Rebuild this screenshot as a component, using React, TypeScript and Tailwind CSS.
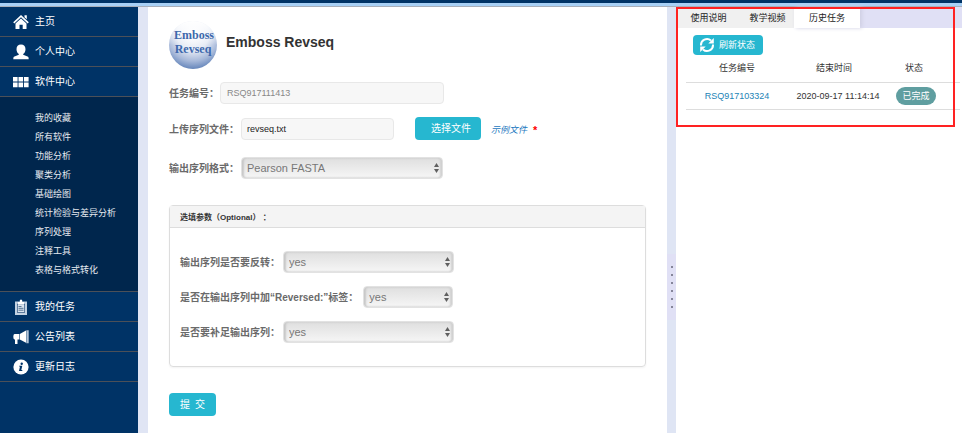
import type { ReactNode } from "react";

const SUB_ITEMS = [
  "我的收藏",
  "所有软件",
  "功能分析",
  "聚类分析",
  "基础绘图",
  "统计检验与差异分析",
  "序列处理",
  "注释工具",
  "表格与格式转化",
];

function HomeIcon() {
  return (
    <svg viewBox="0 0 16 16" className="h-4 w-4" fill="#fff" aria-hidden="true">
      <path d="M8 1 15.800 8.200l-1.100 1.200L8 3.300 1.300 9.400.2 8.200z" />
      <path d="M11.500 1.300h2.300v4l-2.300-2z" />
      <path d="M2.500 9.400 8 4.400l5.500 5V15H9.700v-4.200H6.500V15h-4z" />
    </svg>
  );
}

function UserIcon() {
  return (
    <svg viewBox="0 0 16 16" className="h-4 w-4" fill="#fff" aria-hidden="true">
      <path d="M8 .5c2.900 0 4.500 2 4.500 4.700 0 2.300-1 3.900-2.300 4.800v.8l4.300 1.700c.9.400 1.200 1 1.200 2.800H.3c0-1.800.3-2.400 1.200-2.800l4.300-1.700V10C4.500 9.100 3.500 7.500 3.500 5.200 3.500 2.500 5.100.5 8 .5z" />
    </svg>
  );
}

function GridIcon() {
  return (
    <svg viewBox="0 0 16 16" className="h-4 w-4" fill="#fff" aria-hidden="true">
      <path d="M0 3h4.600v4.600H0zM5.500 3h4.600v4.600H5.500zM11 3h4.600v4.600H11zM0 8.600h4.600v4.600H0zM5.500 8.600h4.600v4.600H5.500zM11 8.600h4.600v4.600H11z" />
    </svg>
  );
}

function ClipboardIcon() {
  return (
    <svg viewBox="0 0 16 16" className="h-4 w-4" aria-hidden="true">
      <path d="M2 2.500h12V16H2z" fill="#c3d2e2" />
      <path d="M4 4.800h8v8.900H4z" fill="#2f5580" />
      <path d="M4.700 5.500h6.600v7.500H4.700z" fill="#dbe5ef" />
      <path d="M5 3h1.800V1.200Q8-.4 9.200 1.200V3H11v2.500H5z" fill="#fff" />
      <path d="M5.500 7.500h3M5.500 9.300h5M5.500 11.200h5" stroke="#35587d" strokeWidth=".8" />
    </svg>
  );
}

function HornIcon() {
  return (
    <svg viewBox="0 0 16 16" className="h-4 w-4" aria-hidden="true">
      <path d="M1.500 5h4.800v5.500H4.500V15H2v-4.500h-.5Q.3 10.300.3 7.800.3 5 1.500 5z" fill="#fff" />
      <path d="M6.800 5 13 1.500v12.300L6.800 10.500z" fill="#fff" />
      <path d="M13.300 1.300h2.400v13h-2.400z" fill="#b3c5d8" />
    </svg>
  );
}

function InfoIcon() {
  return (
    <svg viewBox="0 0 16 16" className="h-4 w-4" aria-hidden="true">
      <circle cx="8" cy="8" r="7.600" fill="#fff" />
      <circle cx="8.700" cy="4.800" r="1.200" fill="#003366" />
      <path d="M6.200 6.700h3.100l-1 4.300h1.100l-.2.900H6l1-4.300H6z" fill="#003366" />
    </svg>
  );
}

function RefreshIcon() {
  return (
    <svg viewBox="0 0 16 16" className="h-4 w-4" aria-hidden="true">
      <path d="M2 8.500A6 6 0 0 1 12 3.600M14 7.500A6 6 0 0 1 4 12.400" fill="none" stroke="#fff" strokeWidth="2" />
      <path d="M14.800 1v5.500H9.300zM1.200 15V9.500h5.500z" fill="#fff" />
    </svg>
  );
}

function Logo() {
  return (
    <svg viewBox="0 0 48 48" className="h-12 w-12 shrink-0 overflow-visible" role="img" aria-label="Emboss Revseq">
      <defs>
        <radialGradient id="ball" cx="50%" cy="28%" r="74%">
          <stop offset="0" stopColor="#fff" />
          <stop offset=".45" stopColor="#e6ebf5" />
          <stop offset=".75" stopColor="#a6b8d9" />
          <stop offset="1" stopColor="#5e80b7" />
        </radialGradient>
        <linearGradient id="shine" x1="0" y1="0" x2="0" y2="1">
          <stop offset="0" stopColor="#fff" />
          <stop offset=".5" stopColor="#fff" stopOpacity="0" />
        </linearGradient>
      </defs>
      <circle cx="24" cy="24" r="24" fill="url(#ball)" />
      <circle cx="24" cy="24" r="24" fill="url(#shine)" />
      <g fill="#3d68ac" fontFamily="'Liberation Serif', serif" fontSize="12" fontWeight="700" textAnchor="middle">
        <text x="25" y="18">Emboss</text>
        <text x="24" y="32">Revseq</text>
      </g>
    </svg>
  );
}

function NavItem({ icon, label }: { icon: ReactNode; label: string }) {
  return (
    <a
      href="#"
      className="flex h-[30px] items-center gap-1.5 border-b border-[#4c5058] bg-[#003366] pl-[13px] text-[10px] text-white"
    >
      {icon}
      <span>{label}</span>
    </a>
  );
}

function Select({ id, value, width }: { id: string; value: string; width: string }) {
  return (
    <div className={`relative ${width}`}>
      <select
        id={id}
        defaultValue={value}
        className="block h-[22px] w-full appearance-none rounded border border-[#e2e2e2] bg-linear-to-b from-[#dfdfdf] to-[#f6f6f6] pl-[5px] text-[11px] text-[#777] shadow-[inset_2px_0_2px_#c8c8c8,inset_-2px_0_2px_#d0d0d0]"
      >
        <option>{value}</option>
      </select>
      <svg viewBox="0 0 5 10" className="pointer-events-none absolute top-1.5 right-1 h-2.5 w-[5px]" fill="#606060" aria-hidden="true">
        <path d="M2.500 0 5 4H0zM0 6h5l-2.500 4z" />
      </svg>
    </div>
  );
}

function Label({ id, children }: { id: string; children: ReactNode }) {
  return (
    <label htmlFor={id} className="pt-0.5 font-bold whitespace-nowrap text-[#6a6a6a]">
      {children}
    </label>
  );
}

export default function App() {
  return (
    <div className="flex min-h-screen flex-col bg-white font-['Liberation_Sans','Noto_Sans_CJK_SC',sans-serif] text-[10px] leading-4 text-[#333]">
      <header className="h-[7px] border-b border-[#a9b0bb] bg-[#a8d0f5]">
        <div className="h-[3px] bg-[#003366]" />
      </header>

      <div className="flex flex-1">
        <nav className="w-[138px] shrink-0 bg-[#003366]">
          <NavItem icon={<HomeIcon />} label="主页" />
          <NavItem icon={<UserIcon />} label="个人中心" />
          <NavItem icon={<GridIcon />} label="软件中心" />
          <ul className="border-b border-[#4c5058] bg-[#00264d] pt-3 pb-[11px] pl-[35px] text-[9px] text-[#e6eaf0]">
            {SUB_ITEMS.map((item) => (
              <li key={item} className="h-[19px] leading-[19px]">
                <a href="#">{item}</a>
              </li>
            ))}
          </ul>
          <NavItem icon={<ClipboardIcon />} label="我的任务" />
          <NavItem icon={<HornIcon />} label="公告列表" />
          <NavItem icon={<InfoIcon />} label="更新日志" />
        </nav>

        <div className="w-2.5 shrink-0 bg-[#e0e5f4]" />

        <main className="min-w-0 flex-1 px-[21px] pt-3.5">
          <div className="flex items-center gap-[9px]">
            <Logo />
            <h1 className="pb-1.5 text-[14px] font-bold text-[#333]">Emboss Revseq</h1>
          </div>

          <form onSubmit={(e) => e.preventDefault()}>
            <div className="mt-[13px] flex items-center gap-[1px]">
              <Label id="task">任务编号：</Label>
              <input
                id="task"
                disabled
                defaultValue="RSQ917111413"
                className="h-[22px] w-56 rounded border border-[#e8e8e8] bg-[#f7f7f7] px-1.5 text-[9px] text-[#888]"
              />
            </div>

            <div className="mt-[13px] flex items-center">
              <Label id="file">上传序列文件：</Label>
              <input
                id="file"
                readOnly
                defaultValue="revseq.txt"
                className="ml-0.5 h-[22px] w-[153px] rounded border border-[#e8e8e8] bg-[#f7f7f7] px-[5px] text-[9px] text-[#222]"
              />
              <button type="button" className="ml-[21px] h-[23px] w-[66px] rounded-sm bg-[#26b7d0] pl-1.5 text-[10px] text-white">
                选择文件
              </button>
              <a href="#" className="ml-2.5 pt-0.5 text-[9px] text-[#1c78c0] italic">
                示例文件
              </a>
              <span className="ml-1.5 pt-0.5 text-[11px] font-bold text-[#f00]">*</span>
            </div>

            <div className="mt-[17px] flex items-center gap-0.5">
              <Label id="format">输出序列格式：</Label>
              <Select id="format" value="Pearson FASTA" width="w-[202px]" />
            </div>

            <section className="mt-[26px] rounded-sm border border-[#ddd] shadow-xs">
              <h2 className="h-[22px] border-b border-[#ddd] bg-[#f4f4f4] pl-2.5 text-[8px] leading-[23px] font-bold">
                选填参数（Optional） ：
              </h2>
              <div className="flex flex-col gap-[13px] px-2.5 pt-[23px] pb-[23px]">
                <div className="flex items-center gap-[3px]">
                  <Label id="reverse">输出序列是否要反转：</Label>
                  <Select id="reverse" value="yes" width="w-[171px]" />
                </div>
                <div className="flex items-center gap-[5px]">
                  <Label id="tag">是否在输出序列中加“Reversed:”标签：</Label>
                  <Select id="tag" value="yes" width="w-[90px]" />
                </div>
                <div className="flex items-center gap-[3px]">
                  <Label id="complement">是否要补足输出序列：</Label>
                  <Select id="complement" value="yes" width="w-[171px]" />
                </div>
              </div>
            </section>

            <button type="submit" className="mt-[26px] h-[23px] w-[47px] rounded-sm bg-[#26b7d0] text-[10px] text-white">
              提&ensp;交
            </button>
          </form>
        </main>

        <div className="w-[9px] shrink-0 bg-[#dfe5f4] pt-[247px]">
          <div className="flex flex-col items-center gap-1.5 bg-[#e0e0f5] py-3">
            {[0, 1, 2, 3, 4, 5].map((dot) => (
              <span key={dot} className="h-0.5 w-0.5 bg-[#85859a]" />
            ))}
          </div>
        </div>

        <aside className="relative w-[286px] shrink-0">
          <div role="tablist" className="flex h-[21px] bg-[#e0e0f5] text-[9px] text-[#222]">
            <button role="tab" type="button" className="w-[59px] bg-[#f0f0f0] pl-1.5">
              使用说明
            </button>
            <button role="tab" type="button" className="w-[59px] bg-[#f0f0f0] pl-1.5">
              教学视频
            </button>
            <button role="tab" type="button" aria-selected="true" className="w-[66px] bg-white shadow-[2px_0_4px_#cfcfe3]">
              历史任务
            </button>
          </div>
          <div className="pt-[7px] pr-0.5 pl-2.5">
            <button
              type="button"
              className="ml-[7px] flex h-5 w-[70px] items-center gap-1 rounded bg-[#26b7d0] pl-1.5 text-[9px] text-white"
            >
              <RefreshIcon />
              刷新状态
            </button>
            <table className="w-full table-fixed text-center text-[9px]">
              <thead>
                <tr className="h-[27px] border-b border-[#ddd]">
                  <th className="w-[102px] font-normal">任务编号</th>
                  <th className="w-[92px] font-normal">结束时间</th>
                  <th className="pr-3 font-normal">状态</th>
                </tr>
              </thead>
              <tbody>
                <tr className="h-[27px] border-b border-[#ddd]">
                  <td>
                    <a href="#" className="text-[#1c84b6]">
                      RSQ917103324
                    </a>
                  </td>
                  <td className="pl-2 whitespace-nowrap">2020-09-17 11:14:14</td>
                  <td className="pr-2">
                    <span className="inline-block h-[18px] w-10 rounded-full bg-[#5f9ea0] align-middle leading-[18px] text-white">
                      已完成
                    </span>
                  </td>
                </tr>
              </tbody>
            </table>
          </div>
          <div className="pointer-events-none absolute top-0 left-0 h-[120px] w-[279px] border-2 border-[#f22]" />
        </aside>
      </div>
    </div>
  );
}
